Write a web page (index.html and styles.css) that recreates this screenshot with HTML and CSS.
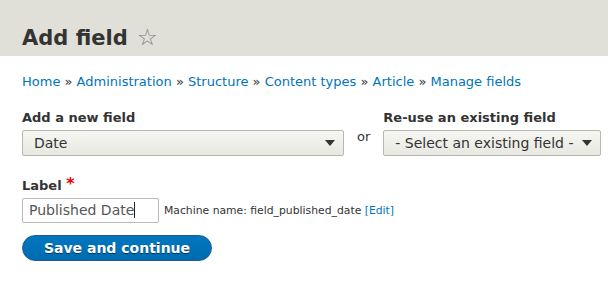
FILE: index.html
```html
<!DOCTYPE html>
<html lang="en">
	<head>
		<meta charset="utf-8">
		<title>Add field</title>
		<link rel="stylesheet" href="styles.css">
	</head>
	<body>
		<header class="page-header">
			<h1 class="page-title">Add field <span class="star">&#9734;</span></h1>
		</header>
		<main class="content">
			<nav class="breadcrumb">
				<a href="#">Home</a> &raquo; <a href="#">Administration</a> &raquo; <a href="#">Structure</a> &raquo; <a href="#">Content types</a> &raquo; <a href="#">Article</a> &raquo; <a href="#">Manage fields</a>
			</nav>
			<form class="field-form">
				<div class="field-row">
					<div class="form-item">
						<label class="form-label">Add a new field</label>
						<div class="select new-field"><span>Date</span><span class="arrow"></span></div>
					</div>
					<span class="or">or</span>
					<div class="form-item">
						<label class="form-label">Re-use an existing field</label>
						<div class="select existing-field"><span>- Select an existing field -</span><span class="arrow"></span></div>
					</div>
				</div>
				<div class="form-item label-item">
					<label class="form-label">Label <span class="required">*</span></label>
					<div class="label-line">
						<div class="text-input">Published Date<span class="caret"></span></div>
						<span class="machine-name">Machine name: field_published_date <a href="#">[Edit]</a></span>
					</div>
				</div>
				<div class="actions">
					<button type="button" class="button-primary">Save and continue</button>
				</div>
			</form>
		</main>
	</body>
</html>
```

FILE: styles.css
```css
body {
	color: #333;
	font-family: "DejaVu Sans", Verdana, sans-serif;
	font-size: 13px;
	margin: 0;
}
a {
	color: #0074bd;
	text-decoration: none;
}
.page-header {
	background-color: #e0e0d8;
	height: 56px;
	padding: 0 22px;
	box-sizing: border-box;
}
.page-title {
	font-size: 21px;
	font-weight: bold;
	line-height: 26px;
	margin: 0;
	padding-top: 24px;
}
.star {
	color: #7f7f74;
	font-size: 23px;
	font-weight: normal;
	margin-left: 2px;
}
.content {
	padding: 0 22px;
}
.breadcrumb {
	line-height: 20px;
	margin-top: 16px;
}
.field-row {
	align-items: flex-end;
	display: flex;
	margin-top: 18px;
}
.form-label {
	display: block;
	font-weight: bold;
	height: 16px;
	line-height: 16px;
	margin-bottom: 4px;
}
.required {
	color: #e00;
	font-size: 16px;
	line-height: 0;
	vertical-align: 1px;
}
.select {
	align-items: center;
	background: linear-gradient(#f6f6f2, #e8e8e2);
	border: 1px solid #b8b8b0;
	border-radius: 2px;
	box-sizing: border-box;
	display: flex;
	font-size: 14px;
	height: 26px;
	justify-content: space-between;
	padding: 0 8px 0 11px;
}
.new-field {
	width: 322px;
}
.existing-field {
	width: 218px;
}
.arrow {
	border-left: 5px solid transparent;
	border-right: 5px solid transparent;
	border-top: 6px solid #333;
	height: 0;
	width: 0;
}
.or {
	line-height: 26px;
	padding: 0 13px 6px 13px;
}
.label-item {
	margin-top: 22px;
}
.label-line {
	align-items: center;
	display: flex;
}
.text-input {
	border: 1px solid #b8b8b8;
	border-radius: 2px;
	box-sizing: border-box;
	color: #555;
	font-size: 14px;
	height: 25px;
	line-height: 23px;
	padding: 0 6px;
	width: 137px;
}
.caret {
	border-left: 1px solid #222;
	display: inline-block;
	height: 16px;
	vertical-align: -3px;
}
.machine-name {
	font-size: 10.8px;
	margin-left: 5px;
}
.actions {
	margin-top: 12px;
}
.button-primary {
	background: linear-gradient(#0077c0, #006bb0);
	border: 1px solid #1e5c90;
	border-radius: 20em;
	color: #fff;
	font-family: "DejaVu Sans", Verdana, sans-serif;
	font-size: 14px;
	font-weight: bold;
	height: 26px;
	padding: 0 20px;
	text-shadow: 0 1px 0 hsla(0, 0%, 0%, 0.5);
	width: 190px;
}
```
